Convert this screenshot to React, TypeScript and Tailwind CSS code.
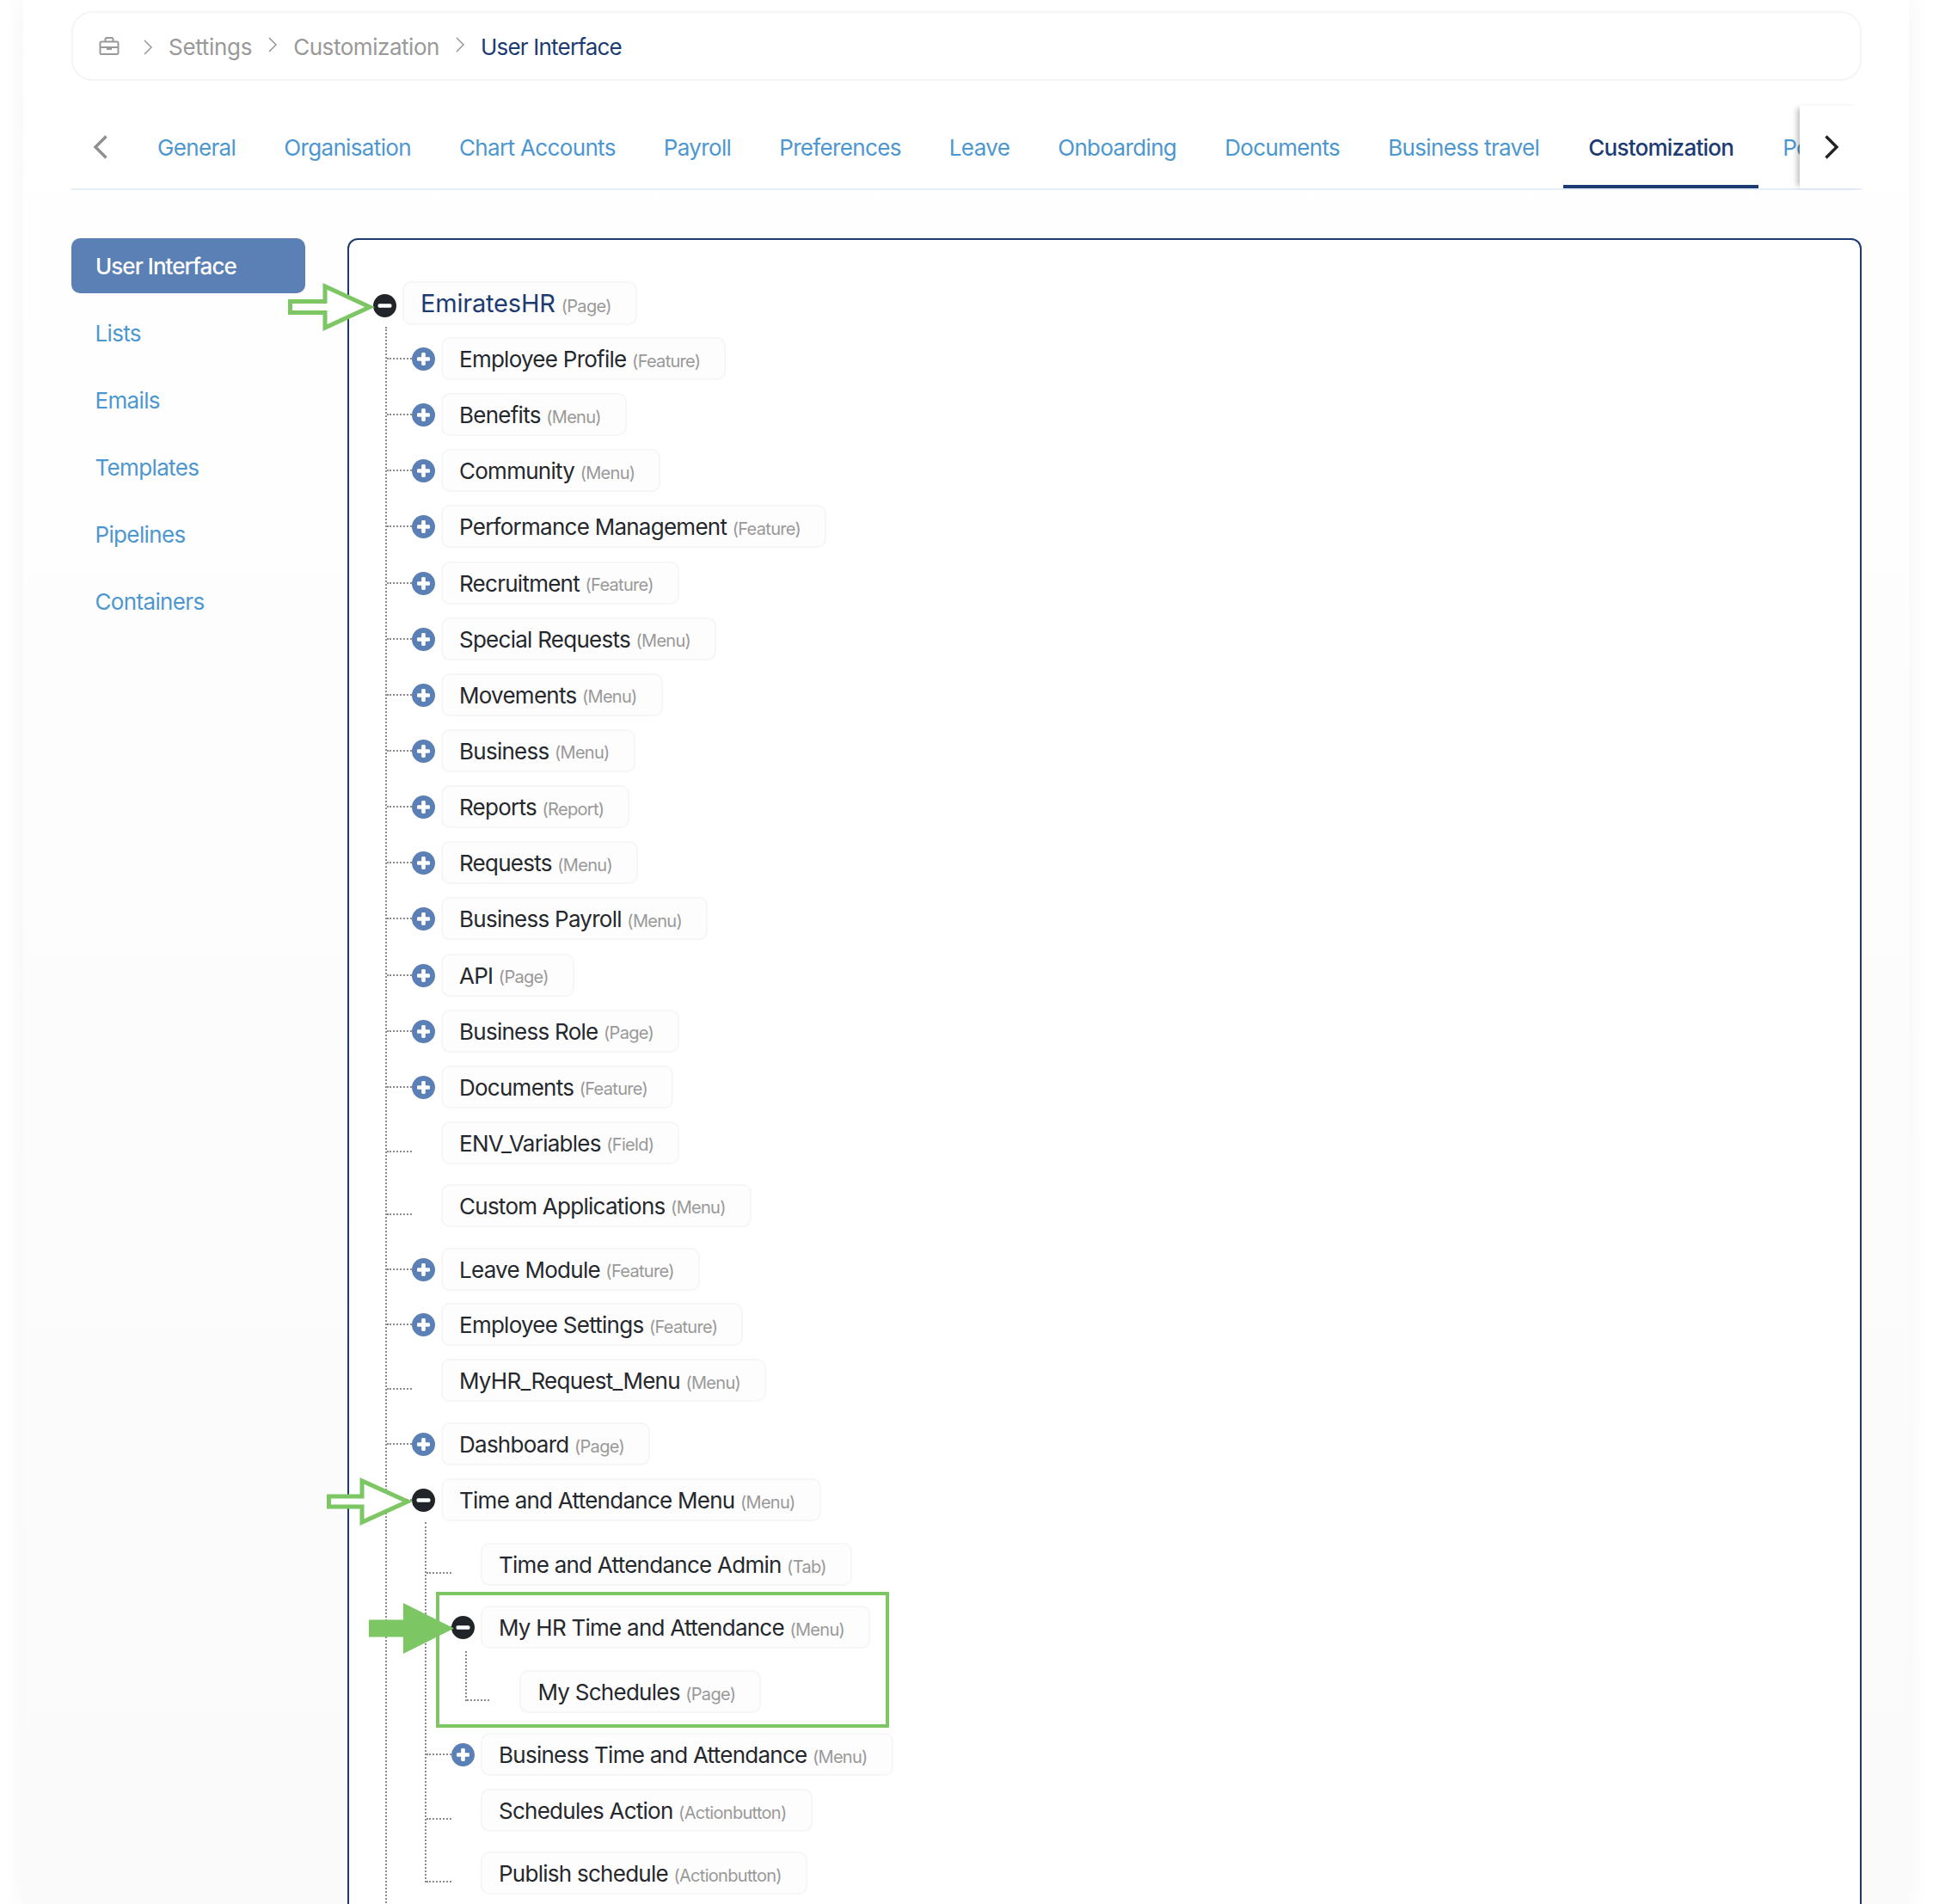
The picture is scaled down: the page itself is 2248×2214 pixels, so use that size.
import React from "react";

const Plus = () => (
  <svg width="27" height="27" viewBox="0 0 27 27" className="shrink-0">
    <circle cx="13.5" cy="13.5" r="13.5" fill="#5b80b6" />
    <rect x="6" y="11.2" width="15" height="4.6" rx="1.4" fill="#fff" />
    <rect x="11.2" y="6" width="4.6" height="15" rx="1.4" fill="#fff" />
  </svg>
);
const Minus = () => (
  <svg width="27" height="27" viewBox="0 0 27 27" className="shrink-0">
    <circle cx="13.5" cy="13.5" r="13.5" fill="#212529" />
    <rect x="5.5" y="11.3" width="16" height="4.4" rx="1.6" fill="#fff" />
  </svg>
);

const Box = ({ label, type }: { label: string; type: string }) => (
  <div className="flex h-[50px] shrink-0 items-center whitespace-nowrap rounded-[10px] border-2 border-[#f6f6f6] bg-[#fdfdfd] pl-[19.5px] pr-[28px]">
    <span className="mt-[1px] text-[26px] tracking-[-0.74px] text-[#25282c]">{label}</span>
    <span className="ml-[6.5px] mt-[5px] text-[20px] tracking-[-0.7px] text-[#999999]">{type}</span>
  </div>
);

type R = { l: string; t: string; i?: "plus" | "minus"; h: string };

const Row = ({ r }: { r: R }) => (
  <div className={"flex items-start " + r.h}>
    <span className={"w-[28.5px] shrink-0 border-t-2 border-dotted border-[#8c8c8c] " + (r.i ? "mt-[24px]" : "mt-[34px]")} />
    {r.i ? (
      <span className="mt-[12px] shrink-0">{r.i === "plus" ? <Plus /> : <Minus />}</span>
    ) : (
      <span className="w-[27px] shrink-0" />
    )}
    <span className="ml-[7px]">
      <Box label={r.l} type={r.t} />
    </span>
  </div>
);

const top: R[] = [
  { l: "Employee Profile", t: "(Feature)", i: "plus", h: "h-[65.15px]" },
  { l: "Benefits", t: "(Menu)", i: "plus", h: "h-[65.15px]" },
  { l: "Community", t: "(Menu)", i: "plus", h: "h-[65.15px]" },
  { l: "Performance Management", t: "(Feature)", i: "plus", h: "h-[65.15px]" },
  { l: "Recruitment", t: "(Feature)", i: "plus", h: "h-[65.15px]" },
  { l: "Special Requests", t: "(Menu)", i: "plus", h: "h-[65.15px]" },
  { l: "Movements", t: "(Menu)", i: "plus", h: "h-[65.15px]" },
  { l: "Business", t: "(Menu)", i: "plus", h: "h-[65.15px]" },
  { l: "Reports", t: "(Report)", i: "plus", h: "h-[65.15px]" },
  { l: "Requests", t: "(Menu)", i: "plus", h: "h-[65.15px]" },
  { l: "Business Payroll", t: "(Menu)", i: "plus", h: "h-[65.15px]" },
  { l: "API", t: "(Page)", i: "plus", h: "h-[65.15px]" },
  { l: "Business Role", t: "(Page)", i: "plus", h: "h-[65.15px]" },
  { l: "Documents", t: "(Feature)", i: "plus", h: "h-[65.15px]" },
  { l: "ENV_Variables", t: "(Field)", h: "h-[73px]" },
  { l: "Custom Applications", t: "(Menu)", h: "h-[74px]" },
  { l: "Leave Module", t: "(Feature)", i: "plus", h: "h-[64.5px]" },
  { l: "Employee Settings", t: "(Feature)", i: "plus", h: "h-[65px]" },
  { l: "MyHR_Request_Menu", t: "(Menu)", h: "h-[74px]" },
  { l: "Dashboard", t: "(Page)", i: "plus", h: "h-[65px]" },
];

const tabs = ["General", "Organisation", "Chart Accounts", "Payroll", "Preferences", "Leave", "Onboarding", "Documents", "Business travel"];
const side = ["Lists", "Emails", "Templates", "Pipelines", "Containers"];

const Chev = () => (
  <svg width="12" height="18" viewBox="0 0 12 18" fill="none" stroke="#8f8f8f" strokeWidth="1.4" className="shrink-0">
    <path d="M2 1l8 8-8 8" />
  </svg>
);

export default function App() {
  return (
    <div
      className="relative h-[2214px] w-[2248px] overflow-hidden bg-white text-[26px] tracking-[-0.65px]"
      style={{ fontFamily: "Inter, 'Noto Sans', sans-serif" }}
    >
      <div className="ml-[27px] h-[2214px] w-[2193px] bg-linear-to-b from-white to-[#fafafa] pl-[56px] pr-[55px] pt-[13px] shadow-[0_0_27px_rgba(0,0,0,0.05)]">
        {/* breadcrumb */}
        <div className="flex h-[81px] items-center rounded-[24px] border-2 border-[#f5f5f5] bg-white pl-[30px]">
          <svg width="24" height="21" viewBox="0 0 24 21" fill="none" stroke="#999999" strokeWidth="2" className="shrink-0">
            <rect x="1.5" y="5.5" width="21" height="14.5" rx="1.5" />
            <path d="M7.5 5.5V2.5a1.5 1.5 0 0 1 1.5-1.5h6a1.5 1.5 0 0 1 1.5 1.5v3M1.5 12h21M10 12v2h4v-2" />
          </svg>
          <span className="ml-[27px] mt-[2px]"><Chev /></span>
          <span className="ml-[18px] mt-[1px] tracking-[-0.3px] text-[#999999]">Settings</span>
          <span className="ml-[18px] -mt-[3px]"><Chev /></span>
          <span className="ml-[18px] mt-[1px] tracking-[-0.45px] text-[#999999]">Customization</span>
          <span className="ml-[18px] -mt-[3px]"><Chev /></span>
          <span className="ml-[18px] mt-[1px] tracking-[-0.8px] text-[#1d3b72]">User Interface</span>
        </div>

        {/* tabs */}
        <div className="mt-[29px] flex h-[98px] items-start border-b-2 border-[#e3eef8]">
          <div className="flex h-[96px] w-[72px] shrink-0 items-center pl-[25px]">
            <svg width="18" height="28" viewBox="0 0 18 28" fill="none" stroke="#8f8f8f" strokeWidth="3.4">
              <path d="M15.5 1.5L3 14l12.5 12.5" />
            </svg>
          </div>
          <div className="flex min-w-0 flex-1 overflow-hidden">
            {tabs.map((t) => (
              <div key={t} className="flex h-[96px] shrink-0 items-center px-[28px] tracking-[-0.65px] text-[#4d97d1]">{t}</div>
            ))}
            <div className="flex h-[96px] shrink-0 items-center border-b-4 border-[#1d3b72] px-[29px] pt-[4px] font-medium tracking-[-0.75px] text-[#1d3b72]">Customization</div>
            <div className="flex h-[96px] shrink-0 items-center px-[28px] tracking-[-0.65px] text-[#4d97d1]">Policies</div>
          </div>
          <div className="z-10 flex h-[96px] w-[72px] shrink-0 items-center bg-white pl-[28px] shadow-[-6px_0_6px_-3px_rgba(0,0,0,0.25)]">
            <svg width="18" height="28" viewBox="0 0 18 28" fill="none" stroke="#222222" strokeWidth="3.4">
              <path d="M2.5 1.5L15 14 2.5 26.5" />
            </svg>
          </div>
        </div>

        {/* content */}
        <div className="mt-[56px] flex items-start">
          <div className="w-[272px] shrink-0">
            <div className="flex h-[64px] items-center rounded-[10px] bg-[#5b80b6] pl-[28px] font-medium tracking-[-0.95px] text-white">User Interface</div>
            {side.map((s) => (
              <div key={s} className="mt-[14px] flex h-[64px] items-center pl-[27.5px] text-[#4d97d1]">{s}</div>
            ))}
          </div>
          <div className="ml-[49px] h-[2000px] min-w-0 flex-1 rounded-[12px] border-2 border-[#1d3b72] bg-white pl-[28px] pt-[48px]">
            <div className="flex h-[53px] items-start">
              <span className="mt-[15px]"><Minus /></span>
              <span className="ml-[7px]">
                <div className="flex h-[51px] shrink-0 items-center whitespace-nowrap rounded-[10px] border-2 border-[#f6f6f6] bg-[#fdfdfd] pl-[19px] pr-[28px]">
                  <span className="text-[29px] tracking-[-0.2px] text-[#1d3b72]">EmiratesHR</span>
                  <span className="ml-[7px] mt-[6px] text-[20px] tracking-[-0.7px] text-[#999999]">(Page)</span>
                </div>
              </span>
            </div>
            <div className="ml-[14px] h-[1900px] border-l-2 border-dotted border-[#8c8c8c] pt-[12px]">
              {top.map((r) => <Row key={r.l} r={r} />)}
              <Row r={{ l: "Time and Attendance Menu", t: "(Menu)", i: "minus", h: "h-[51px]" }} />
              <div className="ml-[44px] border-l-2 border-dotted border-[#8c8c8c] pt-[24px]">
                <Row r={{ l: "Time and Attendance Admin", t: "(Tab)", h: "h-[73px]" }} />
                <Row r={{ l: "My HR Time and Attendance", t: "(Menu)", i: "minus", h: "h-[53px]" }} />
                <div className="ml-[45px] border-l-2 border-dotted border-[#8c8c8c] pt-[22px]">
                  <div className="flex h-[36px] items-start">
                    <span className="mt-[34px] w-[26px] shrink-0 border-t-2 border-dotted border-[#8c8c8c]" />
                    <span className="ml-[35px]"><Box label="My Schedules" type="(Page)" /></span>
                  </div>
                </div>
                <div className="mt-[37px]">
                  <Row r={{ l: "Business Time and Attendance", t: "(Menu)", i: "plus", h: "h-[65px]" }} />
                  <Row r={{ l: "Schedules Action", t: "(Actionbutton)", h: "h-[73px]" }} />
                  <Row r={{ l: "Publish schedule", t: "(Actionbutton)", h: "h-[36px]" }} />
                </div>
              </div>
            </div>
          </div>
        </div>
      </div>

      {/* annotations */}
      <div className="absolute left-[507px] top-[1851px] h-[158px] w-[527px] border-4 border-[#7dc664]" />
      <svg className="absolute left-[330px] top-[322px]" width="110" height="70" viewBox="0 0 110 70">
        <path d="M7.5 28.5H48V11L100 35 48 59V41.5H7.5z" fill="#fff" stroke="#7dc664" strokeWidth="5" />
      </svg>
      <svg className="absolute left-[375px] top-[1711px]" width="110" height="70" viewBox="0 0 110 70">
        <path d="M7.5 29H46V11L99 35 46 59V41H7.5z" fill="#fff" stroke="#7dc664" strokeWidth="5" />
      </svg>
      <svg className="absolute left-[429px] top-[1864px]" width="100" height="60" viewBox="0 0 100 60">
        <path d="M0 19.5H40V0L99 29.5 40 59V39.5H0z" fill="#7dc664" />
      </svg>
    </div>
  );
}
